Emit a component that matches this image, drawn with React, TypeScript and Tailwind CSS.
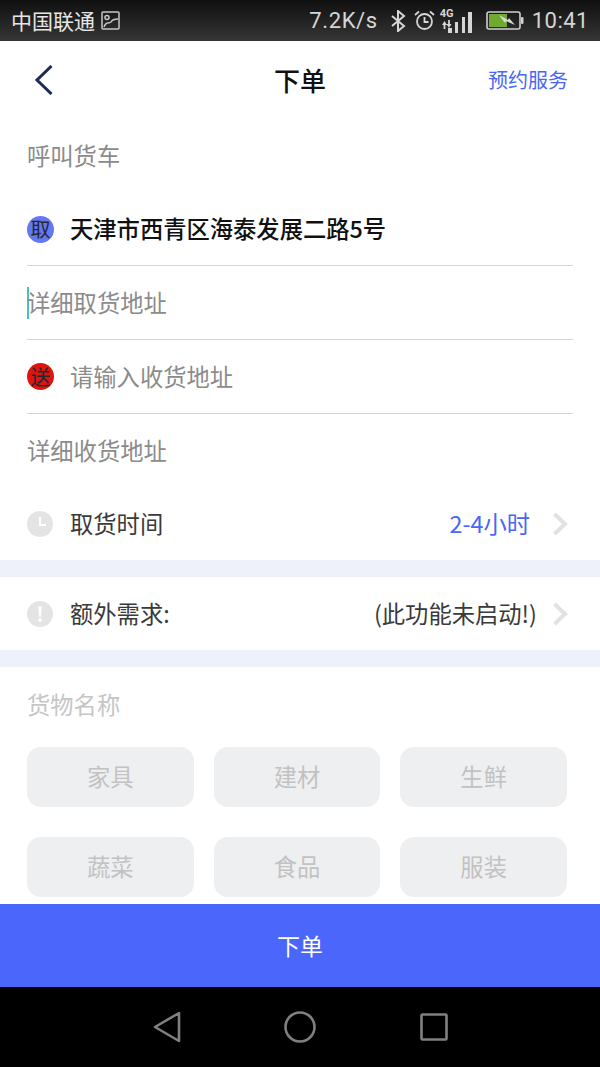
const cjk = "font-['Noto_Sans_CJK_SC','Noto_Sans',sans-serif]";
const goods = ["家具", "建材", "生鲜", "蔬菜", "食品", "服装"];

function StatusBar() {
  return (
    <div className="flex h-[41px] shrink-0 items-center justify-between bg-gradient-to-b from-[#101010] to-[#363636] pl-[11px] pr-[11px] text-[#d6d6d6]">
      <div className="flex items-center gap-[6px]">
        <span className="text-[21px] leading-none text-[#e6e6e6]">中国联通</span>
        <svg width="19" height="19" viewBox="0 0 19 19" fill="none" stroke="#c8c8c8" strokeWidth="1.5">
          <rect x="1" y="1" width="17" height="17" rx="1" />
          <circle cx="6" cy="6.5" r="2" />
          <path d="M3 16c2-6 6-3 7-5s3-3 7-3" />
        </svg>
      </div>
      <div className="flex items-center">
        <span className="font-['Roboto',sans-serif] text-[22px] leading-none tracking-[0.6px]">7.2K/s</span>
        <svg className="ml-[12px]" width="16" height="22" viewBox="0 0 16 22" fill="none" stroke="#d6d6d6" strokeWidth="2">
          <path d="M2 6l12 10-6 5V1l6 5L2 16" />
        </svg>
        <svg className="ml-[8px]" width="21" height="21" viewBox="0 0 21 21" fill="none" stroke="#d6d6d6" strokeWidth="1.8">
          <circle cx="10.5" cy="11.5" r="7.5" />
          <path d="M10.5 7v5h4M1 5l4-3.5M20 5l-4-3.5" />
        </svg>
        <div className="relative ml-[5px] h-[24px] w-[33px]">
          <span className="absolute left-0 top-0 font-['Roboto',sans-serif] text-[11px] font-bold leading-[10px]">4G</span>
          <svg width="33" height="24" viewBox="0 0 33 24" fill="#d6d6d6">
            <path d="M2 16l2.5-4L7 16H5.4v4H3.6v-4zM6.5 15h1.6v-4h1.8v4h1.6L9 19z" />
            <rect x="8" y="19" width="4" height="5" />
            <rect x="15" y="13" width="3" height="11" />
            <rect x="22" y="8" width="3" height="16" />
            <rect x="28" y="3" width="4" height="21" />
          </svg>
        </div>
        <svg className="ml-[13px]" width="38" height="19" viewBox="0 0 38 19">
          <rect x="1" y="1" width="33" height="17" rx="2" fill="none" stroke="#cfcfcf" strokeWidth="1.6" />
          <rect x="3" y="3" width="18" height="13" fill="#6fa92e" />
          <rect x="35" y="6" width="2.5" height="7" rx="1" fill="#cfcfcf" />
          <path d="M13 4l9 5 1-2 6 7-9-4-1 2z" fill="#d9d9d9" />
        </svg>
        <span className="ml-[8px] font-['Roboto',sans-serif] text-[22px] leading-none tracking-[0.5px]">10:41</span>
      </div>
    </div>
  );
}

function Badge({ label, color }: { label: string; color: string }) {
  return (
    <div className={`flex h-[27px] w-[27px] shrink-0 items-center justify-center rounded-full text-[20px] leading-none text-[#26262e] ${color}`}>
      {label}
    </div>
  );
}

function Chevron({ className }: { className?: string }) {
  return (
    <svg className={className} width="16" height="24" viewBox="0 0 16 24" fill="none" stroke="#e2e2e2" strokeWidth="4">
      <path d="M2.5 2L13 12 2.5 22" />
    </svg>
  );
}

export default function App() {
  return (
    <div className={`flex h-[1067px] w-[600px] flex-col overflow-hidden bg-white ${cjk}`}>
      <StatusBar />

      <div className="grid h-[78px] shrink-0 grid-cols-[1fr_auto_1fr] items-center px-[32px]">
        <svg className="ml-[2px]" width="20" height="30" viewBox="0 0 20 30" fill="none" stroke="#1f2a56" strokeWidth="3">
          <path d="M17.5 1L3 15l14.5 14" />
        </svg>
        <span className="text-[26px] font-medium leading-none text-[#111]">下单</span>
        <span className="justify-self-end text-[20px] leading-none text-[#4a66f5]">预约服务</span>
      </div>

      <div className="flex h-[74px] shrink-0 items-center px-[27px] text-[23.3px] leading-none text-[#8b8b8b]">
        呼叫货车
      </div>

      <div className="mx-[27px] flex h-[73px] shrink-0 items-center gap-[16px] border-b border-[#d4d4d4]">
        <Badge label="取" color="bg-[#6478f0]" />
        <span className="text-[23.3px] font-medium leading-none text-[#111]">天津市西青区海泰发展二路5号</span>
      </div>
      <div className="mx-[27px] flex h-[74px] shrink-0 items-center border-b border-[#d4d4d4]">
        <div className="h-[32px] w-[2px] shrink-0 bg-[#4fbcc0]" />
        <span className="-ml-[2px] text-[23.3px] leading-none text-[#8b8b8b]">详细取货地址</span>
      </div>
      <div className="mx-[27px] flex h-[74px] shrink-0 items-center gap-[16px] border-b border-[#d4d4d4]">
        <Badge label="送" color="bg-[#e0140e]" />
        <span className="text-[23.3px] leading-none text-[#8b8b8b]">请输入收货地址</span>
      </div>
      <div className="mx-[27px] flex h-[74px] shrink-0 items-center">
        <span className="text-[23.3px] leading-none text-[#8b8b8b]">详细收货地址</span>
      </div>
      <div className="flex h-[72px] shrink-0 items-center gap-[17px] pl-[27px] pr-[32px]">
        <svg width="26" height="26" viewBox="0 0 26 26">
          <circle cx="13" cy="13" r="13" fill="#e4e4e4" />
          <path d="M13 6v8h6" fill="none" stroke="#fff" strokeWidth="2" />
        </svg>
        <span className="text-[23.3px] leading-none text-[#3a3a3a]">取货时间</span>
        <span className="ml-auto text-[23.3px] leading-none text-[#4a66f5]">2-4小时</span>
        <Chevron className="ml-[5px]" />
      </div>

      <div className="h-[17px] shrink-0 bg-[#eef1f9]" />

      <div className="flex h-[73px] shrink-0 items-center gap-[17px] pl-[27px] pr-[32px]">
        <div className="flex h-[26px] w-[26px] items-center justify-center rounded-full bg-[#e4e4e4] text-[20px] font-bold leading-none text-white">
          !
        </div>
        <span className="text-[23.3px] leading-none text-[#3a3a3a]">额外需求:</span>
        <span className="ml-auto text-[23.3px] leading-none text-[#3a3a3a]">(此功能未启动!)</span>
        <Chevron className="-ml-[2px]" />
      </div>

      <div className="h-[17px] shrink-0 bg-[#eef1f9]" />

      <div className="flex min-h-0 flex-1 flex-col px-[27px] pt-[25px]">
        <span className="text-[23.3px] leading-[24px] text-[#c6c6c6]">货物名称</span>
        <div className="mt-[31px] grid grid-cols-3 gap-x-[20px] gap-y-[30px] pr-[6px]">
          {goods.map((g) => (
            <div
              key={g}
              className="flex h-[60px] items-center justify-center rounded-[14px] bg-[#eeeff1] text-[23.3px] leading-none text-[#c2c2c2]"
            >
              {g}
            </div>
          ))}
        </div>
      </div>

      <div className="flex h-[83px] shrink-0 items-center justify-center bg-[#4a66fb] text-[23px] leading-none text-white">
        下单
      </div>

      <div className="flex h-[80px] shrink-0 items-center justify-center bg-black">
        <div className="flex w-[295px] items-center justify-between">
          <svg width="28" height="32" viewBox="0 0 28 32" fill="none" stroke="#808080" strokeWidth="2.6" strokeLinejoin="round">
            <path d="M26 2v28L2 16z" />
          </svg>
          <svg width="32" height="32" viewBox="0 0 32 32" fill="none" stroke="#808080" strokeWidth="2.6">
            <circle cx="16" cy="16" r="14.5" />
          </svg>
          <svg width="28" height="28" viewBox="0 0 28 28" fill="none" stroke="#808080" strokeWidth="2.6" strokeLinejoin="round">
            <rect x="1.5" y="1.5" width="25" height="25" rx="1" />
          </svg>
        </div>
      </div>
    </div>
  );
}
